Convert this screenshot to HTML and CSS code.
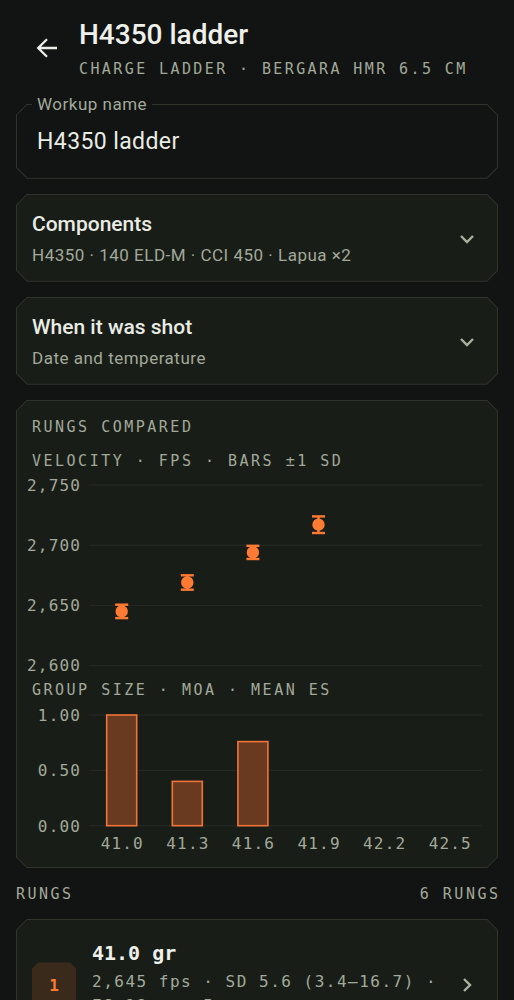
FILE: index.html
```html
<!DOCTYPE html>
<html lang="en">
<head>
<meta charset="utf-8">
<title>H4350 ladder</title>
<link rel="stylesheet" href="styles.css">
</head>
<body>
<div class="page">
  <header class="top">
    <svg class="back" viewBox="0 0 22 22" width="22" height="22" aria-label="Back">
      <path d="M21 11H2.5M11 2.2L2.2 11L11 19.8" fill="none" stroke="#eceee8" stroke-width="2.3"/>
    </svg>
    <div class="titles">
      <h1 class="title">H4350 ladder</h1>
      <div class="subtitle">CHARGE LADDER · BERGARA HMR 6.5 CM</div>
    </div>
  </header>

  <div class="field">
    <div class="cut">
      <div class="cut-in field-in">
        <span class="field-value">H4350 ladder</span>
      </div>
    </div>
    <span class="field-label">Workup name</span>
  </div>

  <div class="cut card">
    <div class="cut-in card-in">
      <div class="card-text">
        <div class="card-title">Components</div>
        <div class="card-sub">H4350 · 140 ELD-M · CCI 450 · Lapua ×2</div>
      </div>
      <svg class="chev" viewBox="0 0 16 10" width="16" height="10"><path d="M2 2L8 8L14 2" fill="none" stroke="#a9b19f" stroke-width="2.4"/></svg>
    </div>
  </div>

  <div class="cut card">
    <div class="cut-in card-in">
      <div class="card-text">
        <div class="card-title">When it was shot</div>
        <div class="card-sub">Date and temperature</div>
      </div>
      <svg class="chev" viewBox="0 0 16 10" width="16" height="10"><path d="M2 2L8 8L14 2" fill="none" stroke="#a9b19f" stroke-width="2.4"/></svg>
    </div>
  </div>

  <div class="cut chart-card">
    <div class="cut-in chart-in">
      <div class="label chart-title">RUNGS COMPARED</div>
      <div class="label chart-sub">VELOCITY · FPS · BARS ±1 SD</div>
      <svg class="vel" viewBox="0 0 480 203" width="480" height="203">
        <g stroke="#262b24" stroke-width="1">
          <line x1="72.3" y1="13" x2="465.3" y2="13"/>
          <line x1="72.3" y1="73.2" x2="465.3" y2="73.2"/>
          <line x1="72.3" y1="133.4" x2="465.3" y2="133.4"/>
          <line x1="72.3" y1="193.6" x2="465.3" y2="193.6"/>
        </g>
        <g class="axis" text-anchor="end">
          <text x="64.2" y="18.8">2,750</text>
          <text x="64.2" y="79">2,700</text>
          <text x="64.2" y="139.2">2,650</text>
          <text x="64.2" y="199.4">2,600</text>
        </g>
        <g fill="#ff7a33" stroke="#ff7a33" stroke-width="2.4">
          <line x1="104.7" y1="132.7" x2="104.7" y2="146.1"/>
          <line x1="98.2" y1="132.7" x2="111.2" y2="132.7"/>
          <line x1="98.2" y1="146.1" x2="111.2" y2="146.1"/>
          <circle cx="104.7" cy="139.4" r="5" />

          <line x1="170.3" y1="103.3" x2="170.3" y2="117.7"/>
          <line x1="163.8" y1="103.3" x2="176.8" y2="103.3"/>
          <line x1="163.8" y1="117.7" x2="176.8" y2="117.7"/>
          <circle cx="170.3" cy="110.5" r="5" />

          <line x1="235.9" y1="73.8" x2="235.9" y2="87"/>
          <line x1="229.4" y1="73.8" x2="242.4" y2="73.8"/>
          <line x1="229.4" y1="87" x2="242.4" y2="87"/>
          <circle cx="235.9" cy="80.4" r="5" />

          <line x1="301.5" y1="44.4" x2="301.5" y2="61"/>
          <line x1="295" y1="44.4" x2="308" y2="44.4"/>
          <line x1="295" y1="61" x2="308" y2="61"/>
          <circle cx="301.5" cy="52.7" r="5" />
        </g>
      </svg>
      <div class="label chart-sub2">GROUP SIZE · MOA · MEAN ES</div>
      <svg class="grp" viewBox="0 0 480 156" width="480" height="156">
        <g stroke="#262b24" stroke-width="1">
          <line x1="72.3" y1="15" x2="465.3" y2="15"/>
          <line x1="72.3" y1="70.4" x2="465.3" y2="70.4"/>
          <line x1="72.3" y1="125.7" x2="465.3" y2="125.7"/>
        </g>
        <g class="axis" text-anchor="end">
          <text x="64.2" y="20.8">1.00</text>
          <text x="64.2" y="76.2">0.50</text>
          <text x="64.2" y="131.5">0.00</text>
        </g>
        <g fill="#6a3a20" stroke="#f0743a" stroke-width="1.6">
          <rect x="89.7" y="15" width="30" height="110.7"/>
          <rect x="155.3" y="81.4" width="30" height="44.3"/>
          <rect x="220.9" y="41.6" width="30" height="84.1"/>
        </g>
        <g class="axis" text-anchor="middle">
          <text x="105.3" y="149">41.0</text>
          <text x="170.9" y="149">41.3</text>
          <text x="236.5" y="149">41.6</text>
          <text x="302.1" y="149">41.9</text>
          <text x="367.7" y="149">42.2</text>
          <text x="433.3" y="149">42.5</text>
        </g>
      </svg>
    </div>
  </div>

  <div class="section-head">
    <span class="label">RUNGS</span>
    <span class="label count">6 RUNGS</span>
  </div>

  <div class="cut rung">
    <div class="cut-in rung-in">
      <div class="badge"><span>1</span></div>
      <div class="rung-text">
        <div class="rung-title">41.0 gr</div>
        <div class="rung-detail">2,645 fps · SD 5.6 (3.4–16.7) · ES 18 · n=5</div>
      </div>
      <svg class="chev-r" viewBox="0 0 10 16" width="10" height="16"><path d="M2 2L8 8L2 14" fill="none" stroke="#a9b19f" stroke-width="2.4"/></svg>
    </div>
  </div>
</div>
</body>
</html>
```

FILE: styles.css
```css
:root {
  --bg: #121413;
  --card: #191d18;
  --line: #2e342c;
  --text: #e9ece4;
  --muted: #a2a99a;
  --orange: #ff7a33;
  --sans: Roboto, "Noto Sans", sans-serif;
  --mono: "DejaVu Sans Mono", "Liberation Mono", monospace;
}

* { box-sizing: border-box; }

html, body {
  margin: 0;
  background: var(--bg);
  color: var(--text);
  font-family: var(--sans);
}

.page {
  padding: 0 16px;
}

/* header */
.top {
  display: flex;
  align-items: flex-start;
  gap: 21px;
  padding: 18px 0 0 20px;
}
.back {
  display: block;
  flex: none;
  margin-top: 19px;
}
.title {
  margin: 0;
  font-size: 28px;
  line-height: 34px;
  font-weight: 500;
  color: #eef0ea;
}
.subtitle {
  margin-top: 7.5px;
  font-family: var(--mono);
  font-size: 15px;
  line-height: 18px;
  letter-spacing: 2.4px;
  color: var(--muted);
}

/* chamfered frames */
.cut {
  --c: 11px;
  background: var(--line);
  padding: 1px;
}
.cut-in {
  --c: 10.4px;
  background: var(--card);
}
.cut, .cut-in {
  clip-path: polygon(var(--c) 0, calc(100% - var(--c)) 0, 100% var(--c), 100% calc(100% - var(--c)), calc(100% - var(--c)) 100%, var(--c) 100%, 0 calc(100% - var(--c)), 0 var(--c));
}

/* field */
.field {
  position: relative;
  margin-top: 26.2px;
}
.field-in {
  background: var(--bg);
  height: 73px;
  display: flex;
  align-items: center;
  padding: 1px 20px 0;
}
.field-value {
  font-size: 23px;
  line-height: 28px;
  letter-spacing: 0.4px;
  color: var(--text);
}
.field-label {
  position: absolute;
  top: -9.8px;
  left: 16px;
  padding: 0 5px;
  background: var(--bg);
  font-size: 17px;
  line-height: 20px;
  letter-spacing: 0.5px;
  color: var(--muted);
}

/* collapsible cards */
.card {
  margin-top: 15px;
}
.card-in {
  height: 86px;
  display: flex;
  align-items: center;
  justify-content: space-between;
  padding: 2px 22px 0 15px;
}
.card-title {
  font-size: 21px;
  line-height: 26px;
  font-weight: 500;
  color: var(--text);
}
.card-sub {
  margin-top: 6.5px;
  font-size: 17px;
  line-height: 22px;
  letter-spacing: 0.5px;
  color: var(--muted);
}
.chev {
  display: block;
  flex: none;
}

/* chart card */
.label {
  font-family: var(--mono);
  font-size: 15px;
  line-height: 18px;
  letter-spacing: 2.5px;
  color: var(--muted);
}
.chart-card {
  margin-top: 15px;
}
.chart-in {
  padding: 17.7px 0 11px;
}
.chart-title,
.chart-sub,
.chart-sub2 {
  padding-left: 15px;
}
.chart-sub {
  margin-top: 16px;
}
.chart-sub2 {
  margin-top: 6.7px;
}
.vel {
  display: block;
  margin-top: 1.3px;
}
.grp {
  display: block;
  margin-top: 1px;
}
.axis text {
  font-family: var(--mono);
  font-size: 16px;
  letter-spacing: 1.2px;
  fill: var(--muted);
}

/* rungs list */
.section-head {
  display: flex;
  justify-content: space-between;
  margin-top: 16.7px;
}
.count {
  margin-right: -2.5px;
}
.rung {
  margin-top: 15.6px;
}
.rung-in {
  display: flex;
  align-items: center;
  gap: 16px;
  padding: 21px 25px 14px 15px;
}
.badge {
  --c: 6px;
  flex: none;
  width: 44px;
  height: 46px;
  margin-top: 12px;
  background: #3a2a1b;
  clip-path: polygon(var(--c) 0, calc(100% - var(--c)) 0, 100% var(--c), 100% calc(100% - var(--c)), calc(100% - var(--c)) 100%, var(--c) 100%, 0 calc(100% - var(--c)), 0 var(--c));
  display: flex;
  align-items: center;
  justify-content: center;
  font-family: var(--mono);
  font-weight: bold;
  font-size: 16px;
  color: var(--orange);
}
.rung-text {
  flex: 1;
  min-width: 0;
}
.rung-title {
  font-family: var(--mono);
  font-weight: bold;
  font-size: 20px;
  line-height: 24px;
  color: #eef0ea;
}
.rung-detail {
  margin-top: 5.5px;
  font-family: var(--mono);
  font-size: 16px;
  line-height: 24px;
  letter-spacing: 1.5px;
  color: var(--muted);
}
.chev-r {
  display: block;
  flex: none;
  margin-top: 12px;
}
```
